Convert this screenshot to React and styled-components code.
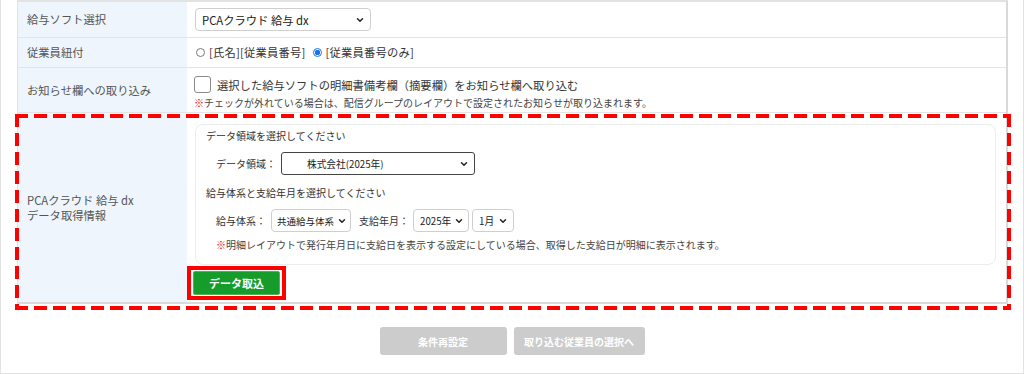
import React from "react";
import styled, { createGlobalStyle } from "styled-components";
import { ChevronDown } from "lucide-react";

const GlobalStyle = createGlobalStyle`
  body {
    margin: 0;
    background: #fff;
    font-family: "Noto Sans CJK JP", "Noto Sans", sans-serif;
    color: #333;
  }
`;

const Page = styled.div`
  width: 1024px;
  height: 374px;
  box-sizing: border-box;
  border: 1px solid #e2e2e2;
  border-top: none;
  display: flex;
  flex-direction: column;
`;

const Table = styled.div`
  width: 991px;
  margin-left: 16px;
  box-sizing: border-box;
  border-top: 2px solid #e3e3e3;
  border-left: 1px solid #e3e3e3;
  border-right: 2px solid #dadada;
  border-bottom: 2px solid #dadada;
`;

const Row = styled.div`
  position: relative;
  display: grid;
  grid-template-columns: 169px 1fr;
  height: ${(p) => p.$height}px;
  border-bottom: ${(p) => (p.$last ? "none" : "1px solid #e4e4e4")};

  ${(p) =>
    p.$highlight &&
    `
    &::after {
      content: "";
      position: absolute;
      top: 1px;
      left: -3px;
      right: -5px;
      bottom: -8px;
      pointer-events: none;
      background:
        repeating-linear-gradient(to right, #ff0000 0 13px, transparent 13px 19px) top left / 100% 4px no-repeat,
        repeating-linear-gradient(to right, #ff0000 0 13px, transparent 13px 19px) bottom left / 100% 4px no-repeat,
        repeating-linear-gradient(to bottom, #ff0000 0 13px, transparent 13px 19px) top left / 4px 100% no-repeat,
        repeating-linear-gradient(to bottom, #ff0000 0 13px, transparent 13px 19px) top right / 4px 100% no-repeat;
    }
  `}
`;

const Label = styled.div`
  background: #eef5fc;
  color: #555;
  font-size: 11.3px;
  line-height: 15px;
  padding: 0 9px;
  display: flex;
  align-items: center;
`;

const Value = styled.div`
  padding: ${(p) => p.$pad || "0 8px"};
  display: flex;
  flex-direction: column;
  justify-content: ${(p) => p.$justify || "center"};
  align-items: flex-start;
  font-size: 11.3px;
  color: #333;
`;

const Select = styled.div`
  width: ${(p) => p.$width}px;
  height: 23px;
  box-sizing: border-box;
  border: 1px solid ${(p) => (p.$dark ? "#444" : "#cfcfcf")};
  border-radius: ${(p) => (p.$dark ? 3 : 4)}px;
  background: #fff;
  display: flex;
  align-items: center;
  justify-content: space-between;
  gap: 3px;
  padding: 0 ${(p) => p.$padRight || 5}px 0 ${(p) => p.$padLeft || 6}px;
  font-size: ${(p) => p.$size || 9.7}px;
  color: #222;
  white-space: nowrap;

  svg {
    flex-shrink: 0;
  }
`;

const InlineRow = styled.div`
  display: flex;
  align-items: center;
`;

const Radio = styled.span`
  width: 9px;
  height: 9px;
  box-sizing: border-box;
  border-radius: 50%;
  border: 1px solid ${(p) => (p.$checked ? "#1a73e8" : "#777")};
  background: ${(p) =>
    p.$checked ? "radial-gradient(circle, #1a73e8 0 2.5px, #fff 3px)" : "#fff"};
  margin-right: 4px;
`;

const RadioText = styled.span`
  margin-right: 7px;
  line-height: 15px;
  letter-spacing: 0.2px;
`;

const Checkbox = styled.span`
  width: 17px;
  height: 17px;
  box-sizing: border-box;
  border: 1px solid #8a8a8a;
  border-radius: 3px;
  background: #fff;
  margin-right: 6px;
`;

const Note = styled.div`
  font-size: 10px;
  line-height: 14px;
  color: #444;
  margin: ${(p) => p.$margin || "0"};
  padding-left: ${(p) => p.$indent || 0}px;
  white-space: nowrap;

  b {
    color: #e60012;
    font-weight: normal;
  }
`;

const Card = styled.div`
  width: 801px;
  height: 141px;
  box-sizing: border-box;
  margin: 11px 0 0 8px;
  border: 1px solid #ececec;
  border-radius: 8px;
  padding: 4px 10px 0;
  font-size: 10px;
  color: #333;
`;

const Heading = styled.div`
  line-height: 14px;
  margin-top: ${(p) => p.$top || 0}px;
`;

const FieldRow = styled.div`
  display: flex;
  align-items: center;
  padding-left: 10px;
  margin-top: ${(p) => p.$top || 0}px;
`;

const FieldLabel = styled.span`
  margin: 0 ${(p) => p.$right || 6}px 0 ${(p) => p.$left || 0}px;
  white-space: nowrap;
`;

const ButtonFrame = styled.div`
  margin-top: 1px;
  border: 4px solid #ff0000;
  padding: 1px 2px;
`;

const GreenButton = styled.button`
  width: 87px;
  height: 24px;
  border: 1px solid #4fb35e;
  border-radius: 2px;
  background: #169c2b;
  color: #fff;
  font-family: inherit;
  font-size: 11px;
  font-weight: bold;
  display: block;
  padding: 0;
`;

const Actions = styled.div`
  display: flex;
  justify-content: center;
  gap: 7px;
  margin-top: 23px;
`;

const GrayButton = styled.button`
  width: ${(p) => p.$width}px;
  height: 28px;
  border: none;
  border-radius: 3px;
  background: #cccccc;
  color: #fff;
  font-family: inherit;
  font-size: 10px;
  font-weight: bold;
  padding: 0;
`;

const Chevron = () => <ChevronDown size={10} strokeWidth={3.5} color="#222" />;

export default function App() {
  return (
    <>
      <GlobalStyle />
      <Page>
        <Table>
          <Row $height={35}>
            <Label>給与ソフト選択</Label>
            <Value>
              <Select $width={176} $size={11.3}>
                <span>PCAクラウド 給与 dx</span>
                <Chevron />
              </Select>
            </Value>
          </Row>
          <Row $height={29}>
            <Label>従業員紐付</Label>
            <Value $pad="0 9px">
              <InlineRow>
                <Radio />
                <RadioText>[氏名][従業員番号]</RadioText>
                <Radio $checked />
                <RadioText>[従業員番号のみ]</RadioText>
              </InlineRow>
            </Value>
          </Row>
          <Row $height={44}>
            <Label>お知らせ欄への取り込み</Label>
            <Value $pad="8px 7px 0" $justify="flex-start">
              <InlineRow>
                <Checkbox />
                <span>選択した給与ソフトの明細書備考欄（摘要欄）をお知らせ欄へ取り込む</span>
              </InlineRow>
              <Note $margin="3px 0 0">
                <b>※</b>チェックが外れている場合は、配信グループのレイアウトで設定されたお知らせが取り込まれます。
              </Note>
            </Value>
          </Row>
          <Row $height={189} $last $highlight>
            <Label>
              PCAクラウド 給与 dx
              <br />
              データ取得情報
            </Label>
            <Value $pad="0" $justify="flex-start">
              <Card>
                <Heading>データ領域を選択してください</Heading>
                <FieldRow $top={9}>
                  <FieldLabel $right={5}>データ領域：</FieldLabel>
                  <Select $width={194} $dark $padLeft={25}>
                    <span>株式会社(2025年)</span>
                    <Chevron />
                  </Select>
                </FieldRow>
                <Heading $top={11}>給与体系と支給年月を選択してください</Heading>
                <FieldRow $top={9}>
                  <FieldLabel $right={5}>給与体系：</FieldLabel>
                  <Select $width={80} $padLeft={5} $padRight={4} $size={9.5}>
                    <span>共通給与体系</span>
                    <Chevron />
                  </Select>
                  <FieldLabel $left={8} $right={4}>
                    支給年月：
                  </FieldLabel>
                  <Select $width={56}>
                    <span>2025年</span>
                    <Chevron />
                  </Select>
                  <Select $width={42} style={{ marginLeft: 3 }}>
                    <span>1月</span>
                    <Chevron />
                  </Select>
                </FieldRow>
                <Note $margin="6px 0 0" $indent={10}>
                  <b>※</b>明細レイアウトで発行年月日に支給日を表示する設定にしている場合、取得した支給日が明細に表示されます。
                </Note>
              </Card>
              <ButtonFrame>
                <GreenButton>データ取込</GreenButton>
              </ButtonFrame>
            </Value>
          </Row>
        </Table>
        <Actions>
          <GrayButton $width={127}>条件再設定</GrayButton>
          <GrayButton $width={131}>取り込む従業員の選択へ</GrayButton>
        </Actions>
      </Page>
    </>
  );
}
